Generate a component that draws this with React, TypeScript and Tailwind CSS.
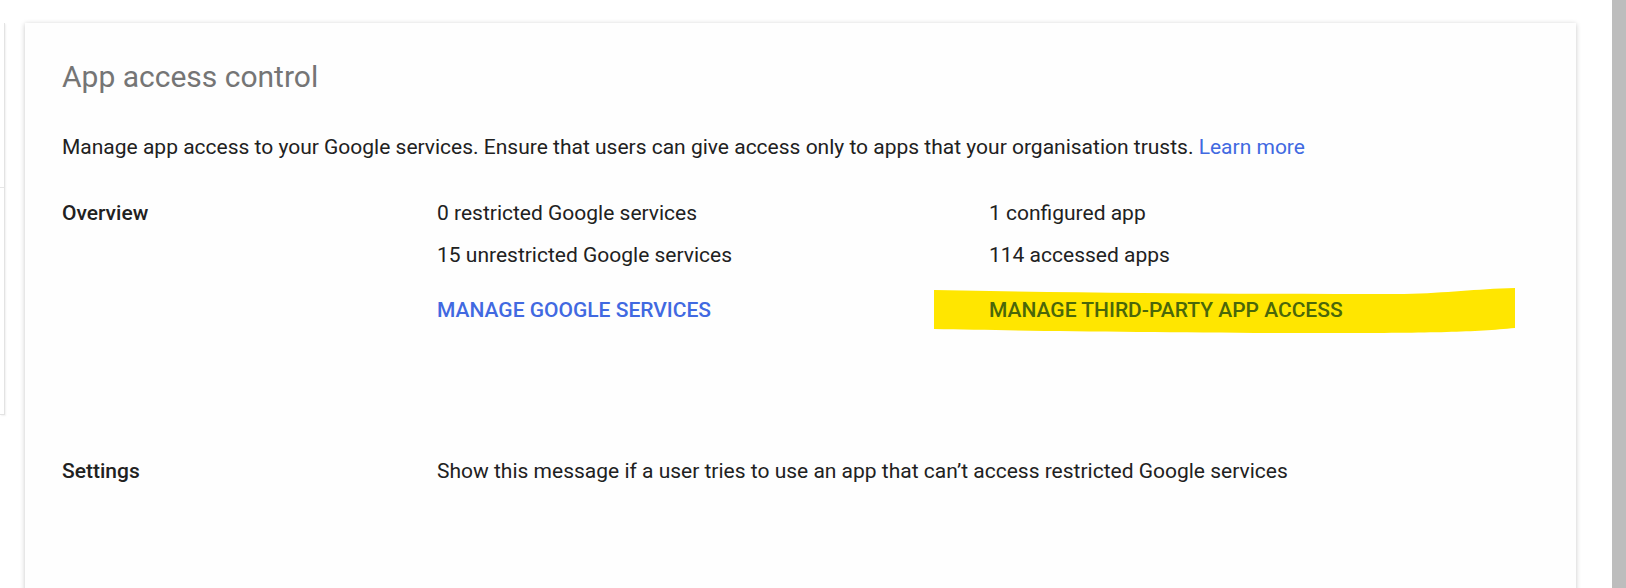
import React from "react";

// ---------------------------------------------------------------------------
// Overview rows
// ---------------------------------------------------------------------------
const SERVICES = ["0 restricted Google services", "15 unrestricted Google services"];
const APPS = ["1 configured app", "114 accessed apps"];

function Highlight() {
  return (
    <svg
      className="absolute left-[-55px] top-[-9px] h-[46px] w-[581px]"
      viewBox="0 0 581 46"
      preserveAspectRatio="none"
    >
      <path
        d="M0 2 C150 5 300 6 470 6 C515 5 540 1 581 0 L581 40 C540 44 500 45 400 45 C250 45 100 43 0 41 Z"
        fill="#ffe600"
      />
    </svg>
  );
}

export default function App() {
  return (
    <div className="flex h-[588px] w-[1626px] overflow-hidden bg-white font-['Roboto',sans-serif] text-[#212121]">
      {/* Left panel edge */}
      <div className="mt-[23px] h-[392px] w-[5px] shrink-0 border-r border-b border-[#e3e3e3] shadow-[1px_1px_2px_rgba(0,0,0,0.06)]">
        <div className="mt-[164px] h-px w-full bg-[#e6e6e6]" />
      </div>

      {/* Card */}
      <div className="ml-[20px] mt-[23px] h-[600px] w-[1551px] shrink-0 bg-[#fefefe] pl-[37px] shadow-[0_1px_5px_rgba(0,0,0,0.22)]">
        <h1 className="pt-[36px] text-[30px] leading-[36px] font-normal text-[#757575]">
          App access control
        </h1>
        <p className="mt-[39px] text-[21px] leading-[26px]">
          Manage app access to your Google services. Ensure that users can give access only to apps that your organisation trusts.{" "}
          <span className="text-[#4169e1]">Learn more</span>
        </p>

        {/* Overview */}
        <div className="mt-[40px] grid grid-cols-[375px_552px_1fr] text-[21px] leading-[26px]">
          <div className="font-medium">Overview</div>
          <div className="flex flex-col gap-[16px]">
            {SERVICES.map((s) => (
              <div key={s}>{s}</div>
            ))}
            <div className="mt-[13px] font-medium uppercase text-[#4169e1]">Manage Google services</div>
          </div>
          <div className="flex flex-col gap-[16px]">
            {APPS.map((s) => (
              <div key={s}>{s}</div>
            ))}
            <div className="relative mt-[13px]">
              <Highlight />
              <span className="relative font-medium uppercase text-[#4a670a]">Manage third-party app access</span>
            </div>
          </div>
        </div>

        {/* Settings */}
        <div className="mt-[135px] grid grid-cols-[375px_1fr] text-[21px] leading-[26px]">
          <div className="font-medium">Settings</div>
          <div>Show this message if a user tries to use an app that can’t access restricted Google services</div>
        </div>
      </div>

      {/* Scrollbar */}
      <div className="ml-[36px] h-full w-[14px] shrink-0 bg-[#bdbdbd]" />
    </div>
  );
}
